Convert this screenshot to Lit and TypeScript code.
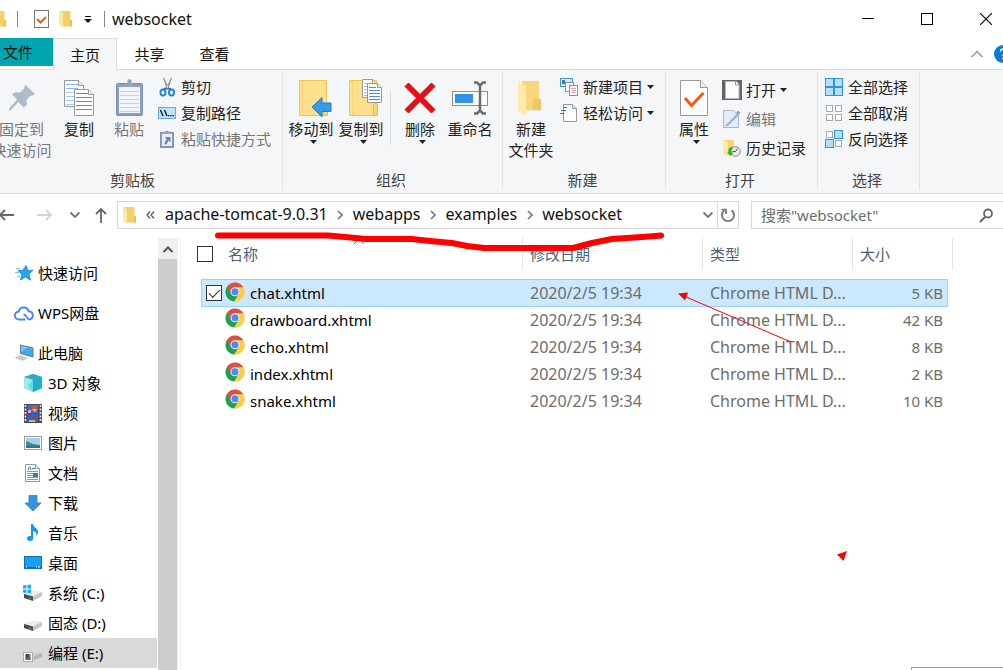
import { LitElement, html, svg, css, nothing, TemplateResult } from "lit";
import { customElement, property, state } from "lit/decorators.js";
import { classMap } from "lit/directives/class-map.js";

const icon = (w: number, h: number, body: unknown) => html`<svg
  width=${w}
  height=${h}
  viewBox="0 0 ${w} ${h}"
  aria-hidden="true"
>${body}</svg>`;

const lines = (x1: number, x2: number, y: number, step: number, n: number, color: string) =>
  Array.from({ length: n }, (_, i) =>
    svg`<path d="M${x1} ${y + i * step + 0.5}H${x2}" stroke=${color} fill="none"/>`);

const sheet = (x: number, y: number, w: number, h: number, fold: number) => svg`
  <path d="M${x + 0.5} ${y + 0.5}h${w - fold - 1}l${fold} ${fold}v${h - fold - 1}h${-(w - 1)}z" fill="#fdfdfd" stroke="#999"/>
  <path d="M${x + w - fold - 0.5} ${y + 0.5}v${fold}h${fold}" fill="#eee" stroke="#999"/>`;

const smallFolder = () => icon(14, 18, svg`
  <path d="M2 1h10.500v9l1 1v5.500H3z" fill="#f5cf6b"/>
  <path d="M12 10h2v6.500h-2z" fill="#edc050"/>
  <path d="M1 1l4 2.500v13L4 17.500 1 15z" fill="#ffe9a4"/>`);

const chrome = () => icon(20, 20, svg`
  <circle cx="10" cy="10" r="9.500" fill="#ffcd40"/>
  <path d="M1.770 5.250A9.500 9.500 0 0 0 9.200 19.470L13.900 12.200 10 10z" fill="#1aa15f"/>
  <path d="M9.200 19.470A9.500 9.500 0 0 0 18.230 5.250H10V10l4 2z" fill="#ffcd40"/>
  <path d="M1.770 5.250A9.500 9.500 0 0 1 18.230 5.250H10L6 12z" fill="#dd5144"/>
  <circle cx="10" cy="9.700" r="4.500" fill="#f3f3f3"/>
  <circle cx="10" cy="9.700" r="3.500" fill="#4a8af4"/>`);

const chevron = (dir: "right" | "down" | "up", color = "#777") =>
  dir === "right"
    ? icon(8, 10, svg`<path d="M2 1l4 4-4 4" fill="none" stroke=${color} stroke-width="1.700"/>`)
    : dir === "down"
      ? icon(12, 10, svg`<path d="M1.500 2.500L6 7l4.500-4.500" fill="none" stroke=${color} stroke-width="1.900"/>`)
      : icon(14, 10, svg`<path d="M1.500 8L7 2.500 12.500 8" fill="none" stroke=${color} stroke-width="1.500"/>`);

const caret = () => icon(7, 4, svg`<path d="M0 0h7L3.500 4z" fill="#222"/>`);

const cell = (x: number, y: number, on: boolean) => svg`<rect x=${x + 0.5} y=${y + 0.5} width=${on ? 8 : 6} height=${on ? 8 : 6} fill=${on ? "#b5e0fb" : "#fcfcfc"} stroke=${on ? "#2f93dd" : "#aaa"}/>`;

const bigFolder = svg`
  <path d="M1.500 1.500h27v24h1v11h-28z" fill="#fee08c" stroke="#eec64e"/>
  <path d="M4.500 2v34" stroke="#f6d376" fill="none"/>
  <rect x="25.500" y="24.500" width="4" height="12" rx="1.500" fill="#f8d674" stroke="#e8be48"/>`;

const drive = svg`
  <path d="M1 10l8-3 10 1v3l-8 5-10-3z" fill="#d9dada"/>
  <path d="M1 10l8-3 10 1-9 4.500z" fill="#eceded"/>
  <path d="M1 10l9 2.500V17l-9-3z" fill="#4a4d4e"/>
  <path d="M10 12.500L19 8v4l-9 5z" fill="#c3c5c6"/>
  <path d="M6 13.500l2 .6v1l-2-.6z" fill="#58d068"/>`;

const I: Record<string, () => TemplateResult> = {
  pin: () => icon(28, 28, svg`
    <path d="M17.500 1l9.500 9-3 1.800-1.500-.3-4 4.500.3 5-3 2.500-5.600-5.600L2.500 26.500 1 26l1.200-3 7-7.400L4 10.500l3-2.200 5 .2 4.500-4.500-.2-1.500z" fill="#acbacb"/>`),
  copy: () => icon(30, 36, svg`
    ${sheet(0, 0, 20, 27, 5)}${lines(2, 14, 4, 4, 2, "#8ab5f5")}${lines(2, 18, 12, 4, 4, "#a9c8f6")}
    ${sheet(10, 9, 20, 27, 5)}${lines(12, 24, 13, 4, 1, "#4a8cf0")}${lines(12, 28, 17, 4, 4, "#4a8cf0")}`),
  paste: () => icon(27, 37, svg`
    <rect x=".5" y="4.500" width="26" height="32" rx="1.500" fill="#8c9fc0" stroke="#7b8db0"/>
    <rect x="3" y="8" width="21" height="26" fill="#f1f5fa"/>
    ${lines(4, 23, 12, 4, 6, "#c4d3e8")}
    <path d="M6 8V5h4l1.500-1a2.200 2.200 0 0 1 4 0L17 5h4v3z" fill="#93a4bd"/>
    <circle cx="13.500" cy="2.500" r="2.200" fill="#93a4bd"/>`),
  cut: () => icon(18, 20, svg`
    <path d="M5 1l1-.5 5 11-2 1zM14 1l-1-.5-5 11 2 1z" fill="#8f9396"/>
    <path d="M9 11L5.500 12.500M9.500 11l3.500 1.500" stroke="#1e7bc4" stroke-width="2" fill="none"/>
    <ellipse cx="5" cy="15.500" rx="2.500" ry="3" fill="#fff" stroke="#1e87d2" stroke-width="2"/>
    <ellipse cx="13.500" cy="15.500" rx="2.500" ry="3" fill="#fff" stroke="#1e87d2" stroke-width="2"/>`),
  path: () => icon(18, 12, svg`
    <rect x=".5" y=".5" width="17" height="11" fill="#bfe2fb" stroke="#6aa9dc"/>
    <path d="M2.500 3l2.500 6M6.500 3L9 9" stroke="#111" stroke-width="1.300" fill="none"/>
    <path d="M10 8h1.300v1.300H10zM12.300 8h1.300v1.300h-1.300zM14.600 8h1.300v1.300h-1.300z" fill="#111"/>`),
  pasteLink: () => icon(18, 20, svg`
    <path d="M3 4h12v14H3z" fill="#e9eff7" stroke="#8497b8" stroke-width="2"/>
    <path d="M5 5V2.500h2.500a1.600 1.600 0 0 1 3 0H13V5z" fill="#93a4bd"/>
    <path d="M7 8h5.500v5.500l-2-2-2 4H6.500c0-2 .5-3.500 2-5z" fill="#6d87ae"/>`),
  moveTo: () => icon(42, 38, svg`<g transform="translate(8 0)">${bigFolder}
    <path d="M14 28l10-9.500v5.500h9v8.500h-9v5.500z" fill="#369be9" stroke="#1e7fcf"/></g>`),
  copyTo: () => icon(42, 38, svg`<g transform="translate(8 0)">${bigFolder}
    ${sheet(14, 0, 15, 19, 4)}${lines(16, 24, 4, 3, 5, "#9fc1f4")}
    ${sheet(19, 4, 15, 20, 4)}${lines(21, 28, 8, 3, 1, "#4a8cf0")}${lines(21, 32, 11, 3, 4, "#4a8cf0")}</g>`),
  remove: () => icon(32, 32, svg`
    <path d="M4.500 1L16 12.500 27.500 1 31 4.500 19.500 16 31 27.500 27.500 31 16 19.500 4.500 31 1 27.500 12.500 16 1 4.500z" fill="#ea0c12" stroke="#b5181d" stroke-width="1"/>`),
  rename: () => icon(36, 34, svg`
    <rect x=".5" y="10.500" width="35" height="14" fill="#fbfbfb" stroke="#8b8f92"/>
    <rect x="3" y="13" width="18" height="9" fill="#2f93e8"/>
    <path d="M22 1.500h3l3 3 3-3h3M22 32.500h3l3-3 3 3h3M28 3.500v27" fill="none" stroke="#6b6e70" stroke-width="2.500"/>`),
  newFolder: () => icon(26, 36, svg`
    <path d="M4 1h17v17l2 1.500V30H6z" fill="#f7d67c"/>
    <path d="M16 18l7 1.500V30h-9z" fill="#efc760"/>
    <path d="M8 30l-1 5 3-4h14l2-1z" fill="#e9eaeb"/>
    <path d="M0 1l8 5v26l-2 3-6-4z" fill="#ffe9ab"/>`),
  newItem: () => icon(18, 18, svg`
    <rect x=".5" y=".5" width="12" height="8" fill="#cdeaf9" stroke="#4b95bd"/>
    <path d="M2 2h3v4H2z" fill="#3f7fa8"/>
    <rect x="5.500" y="4.500" width="8" height="9" fill="#fafafa" stroke="#8f8f8f"/>
    <rect x="9.500" y="7.500" width="8" height="10" fill="#fff" stroke="#8f8f8f"/>
    ${lines(11, 16, 10, 2, 3, "#e7a6a6")}`),
  easyAccess: () => icon(18, 19, svg`
    ${sheet(3, 0, 14, 18, 4)}
    <path d="M3 3.500h4M1 6.500h5M0 9.500h4" stroke="#2c6fb4" stroke-width="1.200" fill="none"/>`),
  props: () => icon(28, 36, svg`${sheet(0, 0, 28, 36, 7)}
    <path d="M5 18l6.500 7.500L23.500 13" fill="none" stroke="#f25a13" stroke-width="3"/>`),
  open: () => icon(20, 20, svg`
    <rect width="20" height="20" fill="#626569"/>
    <path d="M3.500 1.500h11l2.500 3v14H3.500z" fill="#fdfdfd" stroke="#b9b9b9"/>
    <path d="M13.500 1.500v3.500H17" fill="none" stroke="#999"/>`),
  edit: () => icon(18, 18, svg`
    <path d="M.5.500h10l5 5v12H.500z" fill="#e3ecf9" stroke="#a8b8cf"/>
    <path d="M2 16L13.500 4l2 1.500L5 16z" fill="#9eb3d3"/><path d="M13 3l2-2.500 2.500 2L15.500 5z" fill="#8da3c6"/>`),
  history: () => icon(18, 18, svg`
    <path d="M1 1h10v8l1 1v6H2z" fill="#f8d475"/><path d="M0 1l5 2v13l-1 1.500L0 15z" fill="#ffe9a9"/>
    <circle cx="12.500" cy="12.500" r="4.800" fill="#e8e8e8" stroke="#8a8d8f"/>
    <path d="M12.500 12.500l2-3M12.500 12.500h-3" stroke="#555" fill="none"/>
    <path d="M9 8c-3 0-4 3-3.500 5H4l3.500 4 3-3.500H8.500C8 11 8.500 10 10 9z" fill="#27b52c"/>`),
  selAll: () => icon(18, 18, svg`${cell(0, 0, true)}${cell(9, 0, true)}${cell(0, 9, true)}${cell(9, 9, true)}`),
  selNone: () => icon(18, 18, svg`${cell(1, 1, false)}${cell(10, 1, false)}${cell(1, 10, false)}${cell(10, 10, false)}`),
  selInv: () => icon(18, 18, svg`${cell(1, 1, false)}${cell(9, 0, true)}${cell(0, 9, true)}${cell(10, 10, false)}`),

  star: () => icon(18, 18, svg`
    <path d="M11 1.500l2 5 5-.3-4 4 1.500 6L10.500 13 5.500 16l1.300-5.500L3 6.500l5-.2z" fill="#2aa5ec" stroke="#1583cc" stroke-width=".8"/>
    <path d="M1 4.500h4M0 8.500h4M2 12.500h3" stroke="#7cc4f3" fill="none"/>`),
  cloud: () => icon(20, 18, svg`
    <path d="M11.500 15.500H5A4 4 0 0 1 4.800 7.500 5 5 0 0 1 14.500 7.200 4.200 4.200 0 0 1 15.500 15.500C12.500 15.500 13.500 11 9.500 10.500" fill="none" stroke="#4a86ee" stroke-width="1.900"/>`),
  pc: () => icon(20, 18, svg`
    <path d="M6.500 1l12.500 3v9L6.500 9.500z" fill="#3ba9ee" stroke="#6f7a82"/>
    <path d="M7 1.700L14 3.400 7 8z" fill="#74c8f7"/>
    <path d="M0 13.500l6-2.500 8 3-6 3z" fill="#d5d8da"/><path d="M2 13.500l9 2.500M5 12l8 2.500" stroke="#a5a9ab" stroke-width=".6"/>`),
  cube: () => icon(18, 18, svg`
    <path d="M9 0l9 3v11l-9 4-9-4V3z" fill="#3fc3d6"/><path d="M9 0l9 3-9 3-9-3z" fill="#3aa6b6"/>
    <path d="M0 3l9 3v12l-9-4z" fill="#9de9f0"/><path d="M9 6l9-3v11l-9 4z" fill="#1bb0cf"/><path d="M9 6L4 11.500 9 18z" fill="#62d6e4"/>`),
  video: () => icon(18, 19, svg`
    <rect width="18" height="19" fill="#4e4e4e"/><rect x="4" y="1" width="10" height="8" fill="#3f6ed8"/><rect x="4" y="10" width="10" height="8" fill="#335fcc"/>
    <path d="M1.500 1v17M16.500 1v17" stroke="#e8e8e8" stroke-width="1.600" stroke-dasharray="2 1.500"/>
    <circle cx="10.500" cy="4.500" r="2.500" fill="#e94b23"/><path d="M8 5h5l-2 3z" fill="#f3ca2d"/><path d="M4 6h3v3H4z" fill="#f0a0b8"/><path d="M8 13l4-2v4z" fill="#d92b21"/><path d="M5 16h6v2H5z" fill="#e9b62d"/>`),
  picture: () => icon(18, 15, svg`
    <rect x=".5" y=".5" width="17" height="13" fill="#fff" stroke="#999"/><path d="M2 2h14v10H2z" fill="#9bd2f5"/>
    <path d="M2 5l3 1 4 2 7 1v3H2z" fill="#4d8a63"/><path d="M2 10h14v2H2z" fill="#326fa8"/>`),
  doc: () => icon(16, 18, svg`${sheet(0, 0, 15, 18, 4)}
    <path d="M3 6l1-3h1l1 3M7 4.500h3" stroke="#2d8fd8" fill="none"/>${lines(2, 13, 7, 2, 5, "#8d9aa2")}<path d="M8 9h5v4H8z" fill="#3682ad"/>`),
  down: () => icon(18, 18, svg`<path d="M5 1.500h8V9h4l-8 8-8-8h4z" fill="#3593e2" stroke="#2b7fca" stroke-width=".8"/>`),
  music: () => icon(18, 18, svg`
    <ellipse cx="6" cy="14.500" rx="3" ry="2.500" fill="#0a9bf5"/><path d="M7 0h2c.5 3.500 5 4.500 5 8 0 2-1 3-2 4 1-3-.5-4.500-3-5v8H7z" fill="#0a9bf5"/>`),
  desktop: () => icon(18, 14, svg`
    <rect x=".5" y=".5" width="17" height="12" fill="#14a0fb" stroke="#1670b3"/><path d="M1 11.500h16" stroke="#0d6fb9"/><path d="M2 11h1M12 11h1M14 11h2" stroke="#fff"/>`),
  driveC: () => icon(20, 18, svg`${drive}<path d="M0 1.500l3.500-.5v3.500H0zM4.500 1L8 .5v4H4.500zM0 5.500h3.500V9L0 8.500zM4.500 5.500H8v4L4.500 9z" fill="#10b3f0"/>`),
  driveD: () => icon(20, 18, svg`${drive}`),
  driveE: () => icon(20, 18, svg`<path d="M9 11l3-3 7 1v4l-8 3z" fill="#cfd1d2"/><path d="M11 12l8-3v4l-8 3z" fill="#b3b5b6"/>
    <rect x=".5" y="8.500" width="9" height="9" fill="#fff" stroke="#aaa"/><path d="M2 10h6v6H2z" fill="#85a1a7"/><path d="M3 10h3v3H3z" fill="#4e4137"/><path d="M3 13h4v3H3z" fill="#3e6f86"/>`),
};

@customElement("ribbon-button")
class RibbonButton extends LitElement {
  @property() icon = "";
  @property() label = "";
  @property() second = "";
  @property({ type: Boolean }) small = false;
  @property({ type: Boolean }) menu = false;
  @property({ type: Boolean }) disabled = false;
  static styles = css`
    :host { display: block; }
    button {
      display: flex; align-items: center; border: 0; padding: 0; background: none;
      font: inherit; color: #222; white-space: nowrap; width: 100%;
    }
    button:disabled { color: #777; }
    .big { flex-direction: column; line-height: 21px; }
    .big .pic { height: 43px; }
    .pic { display: flex; align-items: center; justify-content: center; }
    .big svg { flex: none; }
    .big .arrow { padding-left: 4px; }
    .small { gap: 4px; line-height: 20px; height: 26px; }
    .small .pic { width: 20px; }
    .arrow { display: flex; }
    svg { display: block; }
  `;
  render() {
    return html`<button class=${this.small ? "small" : "big"} ?disabled=${this.disabled}>
      <span class="pic">${I[this.icon]()}</span>
      <span>${this.label}</span>
      ${this.second ? html`<span>${this.second}</span>` : nothing}
      ${this.menu ? html`<span class="arrow">${caret()}</span>` : nothing}
    </button>`;
  }
}

interface Place { icon: string; name: string; level: number; gap?: boolean; selected?: boolean }
interface Entry { name: string; date: string; type: string; size: string; checked: boolean }

@customElement("app-root")
class AppRoot extends LitElement {
  @state() private places: Place[] = [
    { icon: "star", name: "快速访问", level: 0, gap: true },
    { icon: "cloud", name: "WPS网盘", level: 0, gap: true },
    { icon: "pc", name: "此电脑", level: 0 },
    { icon: "cube", name: "3D 对象", level: 1 },
    { icon: "video", name: "视频", level: 1 },
    { icon: "picture", name: "图片", level: 1 },
    { icon: "doc", name: "文档", level: 1 },
    { icon: "down", name: "下载", level: 1 },
    { icon: "music", name: "音乐", level: 1 },
    { icon: "desktop", name: "桌面", level: 1 },
    { icon: "driveC", name: "系统 (C:)", level: 1 },
    { icon: "driveD", name: "固态 (D:)", level: 1 },
    { icon: "driveE", name: "编程 (E:)", level: 1, selected: true },
  ];
  @state() private files: Entry[] = [
    ["chat.xhtml", "5 KB"], ["drawboard.xhtml", "42 KB"], ["echo.xhtml", "8 KB"],
    ["index.xhtml", "2 KB"], ["snake.xhtml", "10 KB"],
  ].map(([name, size], i) => ({ name, size, date: "2020/2/5 19:34", type: "Chrome HTML D...", checked: i === 0 }));

  static styles = css`
    :host {
      display: flex; flex-direction: column; position: relative; height: 100vh; overflow: hidden;
      background: #fff; color: #111;
      font: 15px/20px "Noto Sans", "Noto Sans CJK SC", sans-serif;
    }
    * { box-sizing: border-box; }
    svg { display: block; flex: none; }
    button, input { font: inherit; color: inherit; }
    button { border: 0; padding: 0; background: none; }
    a { color: inherit; text-decoration: none; }

    .title { display: flex; align-items: center; height: 38px; flex: none; }
    .quick { display: flex; align-items: center; margin-left: -8px; }
    .quick button { display: flex; justify-content: center; }
    .quick .folder { width: 14px; }
    .bar { width: 1px; height: 16px; background: #888; }
    .quick .bar { margin: 0 6px 0 11px; }
    .quick .check { width: 34px; }
    .quick .down { width: 32px; }
    .title h1 { font-size: 16px; line-height: 20px; font-weight: 400; margin: 0 auto 0 7px; color: #111; }
    .win { display: flex; margin-right: -12px; }
    .win button { width: 59px; height: 38px; display: grid; place-items: center; }

    .tabs { display: flex; height: 32px; flex: none; box-shadow: inset 0 -1px #dadbdc; }
    .tabs button { width: 65px; height: 31px; }
    .tabs .file { width: 70px; height: 28px; margin-left: -17px; background: #00a5b0; }
    .tabs .active { height: 32px; background: #f5f6f7; border: 1px solid #dadbdc; border-bottom: 0; width: 64px; }
    .tabs .end { display: flex; align-items: center; gap: 10px; margin: 0 -9px 0 auto; }
    .tabs .end button { width: auto; }
    .help { fill: #0a7ad8; }

    .ribbon { display: flex; flex: none; background: #f5f6f7; border-bottom: 1px solid #dadbdc; padding: 2px 0 3px; }
    .group { border-right: 1px solid #e2e3e4; padding: 4px 0 0 3px; }
    .group:first-child { margin-left: -18px; width: 301px; padding-left: 7px; }
    .organize { width: 220px; }
    .create { width: 163px; }
    .open { width: 152px; }
    .select { width: 102px; }
    .body { display: flex; height: 94px; }
    .body > ribbon-button { width: 50px; flex: none; }
    .body > .wide { width: 65px; }
    .body > hr { border: 0; width: 1px; height: 54px; background: #dcddde; margin: 15px 4px 0; }
    .stack { padding-left: 3px; margin-top: -2px; }
    .loose { display: grid; gap: 3px; align-content: start; padding-left: 3px; margin-top: 1px; }
    .caption { text-align: center; color: #444; padding-right: 6px; }

    .address { display: flex; flex: none; align-items: flex-start; padding: 7px 0 9px; }
    .go { display: flex; margin-left: -14px; margin-right: 1px; height: 28px; align-items: center; }
    .go button { display: grid; place-items: center; height: 28px; width: 30px; }
    .go .far { width: 39px; }
    .go .tight { width: 22px; }
    .path { display: flex; flex: 1; min-width: 0; align-items: center; height: 28px; border: 1px solid #d9d9d9; padding-left: 4px; }
    .path .back { margin: 0 10px; color: #444; display: flex; }
    .path a { white-space: nowrap; font-size: 16px; padding-bottom: 2px; }
    .path .sep { width: 25px; display: flex; justify-content: center; }
    .path .drop { margin-left: auto; width: 18px; display: grid; place-items: center; }
    .path .reload { width: 21px; height: 26px; border-left: 1px solid #d9d9d9; display: grid; place-items: center; }
    .search { display: flex; align-items: center; width: 252px; height: 28px; margin-left: 12px; border: 1px solid #d9d9d9; border-right: 0; padding: 0 9px; }
    .search input { flex: 1; min-width: 0; border: 0; padding: 0; outline: 0; background: none; }
    .search input::placeholder { color: #6d6d6d; opacity: 1; }

    .main { display: flex; flex: 1; min-height: 0; }
    nav { width: 158px; flex: none; overflow: hidden; padding: 20px 1px 0 0; }
    nav a { display: flex; align-items: center; height: 30px; gap: 4px; padding-left: 14px; color: #000; white-space: nowrap; }
    nav a.sub { padding-left: 23px; gap: 5px; }
    nav a.gap { margin-bottom: 10px; }
    nav a.selected { background: #d9d9d9; }
    nav .ico { width: 20px; display: flex; justify-content: center; }
    .scroll { width: 20px; flex: none; background: #f0f0f0; display: flex; flex-direction: column; }
    .scroll button { height: 21px; display: grid; place-items: center; }
    .thumb { flex: 1; background: #cdcdcd; margin-right: 1px; }
    .files { flex: 1; min-width: 0; margin-left: 2px; border-left: 1px solid #f0f0f0; }
    table, thead, tbody { display: block; }
    tr { display: grid; align-items: center; }
    th, td { padding: 0; text-align: left; font-weight: 400; white-space: nowrap; }
    thead tr { grid-template-columns: 326px 180px 150px 100px; padding-left: 16px; margin-bottom: 9px; }
    th { height: 32px; border-right: 1px solid #e5e5e5; color: #4c607a; padding-left: 7px; display: flex; align-items: center; }
    th:first-child { padding-left: 0; gap: 15px; }
    tbody tr { grid-template-columns: 328px 180px 150px 1fr; width: 747px; height: 27px; margin-left: 20px; color: #6d6d6d; }
    tbody tr.on { background: #cce8ff; box-shadow: inset 0 0 0 1px #99d1ff; height: 28px; margin-bottom: -1px; }
    td { padding-left: 1px; font-size: 16px; }
    td:last-child { text-align: right; padding-right: 5px; font-size: 15px; }
    td.name { display: flex; align-items: center; gap: 5px; color: #000; padding-left: 5px; font-size: 15px; }
    .name .ico { margin: -3px 0 0 -2px; }
    input[type="checkbox"] { appearance: none; flex: none; width: 16px; height: 16px; margin: 0; border: 1px solid #333; background: #fff; display: grid; place-items: center; }
    tbody tr:not(.on) input { opacity: 0; }
    input:checked::before { content: ""; width: 10px; height: 5px; border: solid #333; border-width: 0 0 1px 1px; rotate: -45deg; margin-bottom: 3px; }

    .ink { position: absolute; inset: 0; pointer-events: none; width: 100%; height: 100%; }
    .sort { position: absolute; left: 353px; top: 238px; }
    .popup { position: absolute; right: 0; bottom: 0; width: 92px; height: 3px; border: solid #a0a0a0; border-width: 1px 0 0 1px; background: #fff; }
  `;

  private toggle(i: number) {
    this.files = this.files.map((f, n) => (n === i ? { ...f, checked: !f.checked } : f));
  }

  private titleBar() {
    return html`<header class="title">
      <div class="quick">
        <button class="folder" aria-label="资源管理器">${smallFolder()}</button>
        <span class="bar"></span>
        <button class="check" aria-label="属性">${icon(15, 18, svg`
          <rect x=".5" y=".5" width="14" height="17" fill="#fbfbfb" stroke="#777"/>
          <path d="M3 9l3.500 3.500L12 7" fill="none" stroke="#ee5a1c" stroke-width="2"/>`)}</button>
        <button class="folder" aria-label="新建文件夹">${smallFolder()}</button>
        <button class="down" aria-label="自定义快速访问工具栏">${icon(8, 8, svg`<path d="M1 1.500h6" stroke="#111"/><path d="M0 4h8L4 8z" fill="#111"/>`)}</button>
      </div>
      <span class="bar"></span>
      <h1>websocket</h1>
      <div class="win">
        <button aria-label="最小化">${icon(12, 12, svg`<path d="M0 5.500h12" stroke="#000"/>`)}</button>
        <button aria-label="最大化">${icon(12, 12, svg`<rect x=".5" y=".5" width="11" height="11" fill="none" stroke="#000"/>`)}</button>
        <button aria-label="关闭">${icon(12, 12, svg`<path d="M0 0l12 12M12 0L0 12" stroke="#000" stroke-width="1.100"/>`)}</button>
      </div>
    </header>
    <div class="tabs">
      <button class="file">文件</button>
      <button class="active">主页</button>
      <button>共享</button>
      <button>查看</button>
      <div class="end">
        <button aria-label="折叠功能区">${chevron("up", "#999")}</button>
        <button aria-label="帮助">${icon(18, 18, svg`<circle class="help" cx="9" cy="9" r="9"/>
          <path d="M6.500 6.500a2.600 2.600 0 1 1 4 2.200c-1 .7-1.500 1-1.500 2.300M9 12.500v1.500" fill="none" stroke="#fff" stroke-width="1.500"/>`)}</button>
      </div>
    </div>`;
  }

  private ribbon() {
    return html`<div class="ribbon">
      <section class="group">
        <div class="body">
          <ribbon-button class="wide" icon="pin" label="固定到" second="快速访问" disabled></ribbon-button>
          <ribbon-button icon="copy" label="复制"></ribbon-button>
          <ribbon-button icon="paste" label="粘贴" disabled></ribbon-button>
          <div class="stack">
            <ribbon-button small icon="cut" label="剪切"></ribbon-button>
            <ribbon-button small icon="path" label="复制路径"></ribbon-button>
            <ribbon-button small icon="pasteLink" label="粘贴快捷方式" disabled></ribbon-button>
          </div>
        </div>
        <div class="caption">剪贴板</div>
      </section>
      <section class="group organize">
        <div class="body">
          <ribbon-button icon="moveTo" label="移动到" menu></ribbon-button>
          <ribbon-button icon="copyTo" label="复制到" menu></ribbon-button>
          <hr />
          <ribbon-button icon="remove" label="删除" menu></ribbon-button>
          <ribbon-button icon="rename" label="重命名"></ribbon-button>
        </div>
        <div class="caption">组织</div>
      </section>
      <section class="group create">
        <div class="body">
          <ribbon-button icon="newFolder" label="新建" second="文件夹"></ribbon-button>
          <div class="stack">
            <ribbon-button small menu icon="newItem" label="新建项目"></ribbon-button>
            <ribbon-button small menu icon="easyAccess" label="轻松访问"></ribbon-button>
          </div>
        </div>
        <div class="caption">新建</div>
      </section>
      <section class="group open">
        <div class="body">
          <ribbon-button icon="props" label="属性" menu></ribbon-button>
          <div class="loose">
            <ribbon-button small menu icon="open" label="打开"></ribbon-button>
            <ribbon-button small icon="edit" label="编辑" disabled></ribbon-button>
            <ribbon-button small icon="history" label="历史记录"></ribbon-button>
          </div>
        </div>
        <div class="caption">打开</div>
      </section>
      <section class="group select">
        <div class="body">
          <div class="stack">
            <ribbon-button small icon="selAll" label="全部选择"></ribbon-button>
            <ribbon-button small icon="selNone" label="全部取消"></ribbon-button>
            <ribbon-button small icon="selInv" label="反向选择"></ribbon-button>
          </div>
        </div>
        <div class="caption">选择</div>
      </section>
    </div>`;
  }

  private addressBar() {
    const arrow = (d: string, color: string) => icon(16, 16, svg`<path d=${d} fill="none" stroke=${color} stroke-width="1.800"/>`);
    const crumbs = ["apache-tomcat-9.0.31", "webapps", "examples", "websocket"];
    return html`<div class="address">
      <div class="go">
        <button class="far" aria-label="后退">${arrow("M16 8H2M7 3L2 8l5 5", "#666")}</button>
        <button class="far" aria-label="前进">${arrow("M0 8h14M9 3l5 5-5 5", "#d3d3d3")}</button>
        <button class="tight" aria-label="最近位置">${chevron("down")}</button>
        <button aria-label="上移">${arrow("M8 16V2M3 7l5-5 5 5", "#666")}</button>
      </div>
      <div class="path">
        ${smallFolder()}
        <span class="back">${icon(9, 8, svg`<path d="M4 .5L1 4l3 3.500M8 .5L5 4l3 3.500" fill="none" stroke="#555" stroke-width="1.200"/>`)}</span>
        ${crumbs.map((c, i) => html`${i ? html`<span class="sep">${chevron("right")}</span>` : nothing}<a href="#">${c}</a>`)}
        <button class="drop" aria-label="以前的位置">${chevron("down")}</button>
        <button class="reload" aria-label="刷新">${icon(16, 16, svg`
          <path d="M4.500 3.300A6 6 0 1 0 11.500 3.300" fill="none" stroke="#777" stroke-width="1.900"/><path d="M1.500 2.500H6V7" fill="none" stroke="#777" stroke-width="1.700"/>`)}</button>
      </div>
      <label class="search">
        <input type="text" aria-label="搜索" placeholder='搜索"websocket"' />
        ${icon(15, 15, svg`<circle cx="9" cy="5.500" r="4" fill="none" stroke="#666" stroke-width="1.800"/><path d="M6.500 8.500L1 14" stroke="#666" stroke-width="2"/>`)}
      </label>
    </div>`;
  }

  render() {
    return html`
      ${this.titleBar()} ${this.ribbon()} ${this.addressBar()}
      <div class="main">
        <nav>
          ${this.places.map((p) => html`<a href="#" class=${classMap({ sub: p.level === 1, gap: !!p.gap, selected: !!p.selected })}>
            <span class="ico">${I[p.icon]()}</span><span>${p.name}</span></a>`)}
        </nav>
        <div class="scroll">
          <button aria-label="向上滚动">${icon(12, 8, svg`<path d="M1.500 7L6 2.500 10.500 7" fill="none" stroke="#555" stroke-width="2"/>`)}</button>
          <div class="thumb"></div>
        </div>
        <div class="files">
          <table>
            <thead><tr>
              <th><input type="checkbox" aria-label="全选" />名称</th>
              <th>修改日期</th><th>类型</th><th>大小</th>
            </tr></thead>
            <tbody>
              ${this.files.map((f, i) => html`<tr class=${classMap({ on: f.checked })}>
                <td class="name">
                  <input type="checkbox" aria-label=${f.name} .checked=${f.checked} @change=${() => this.toggle(i)} />
                  <span class="ico">${chrome()}</span><a href="#">${f.name}</a>
                </td>
                <td>${f.date}</td><td>${f.type}</td><td>${f.size}</td>
              </tr>`)}
            </tbody>
          </table>
        </div>
      </div>
      <div class="sort">${icon(12, 8, svg`<path d="M1 6l5-5 5 5" fill="none" stroke="#777"/>`)}</div>
      <svg class="ink" aria-hidden="true">
        <path d="M218 235.500H328L345 237 366 239H412L430 241 452 243 467 246 484 248H573L592 243 612 239 642 237 661 235.500" fill="none" stroke="#f00" stroke-width="6" stroke-linecap="round" stroke-linejoin="round"/>
        <path d="M685 296.500L791 342" stroke="#f00" fill="none"/>
        <path d="M678 293.500L688 292.500 685 300.500zM837 554.500L847 551 843.500 561z" fill="#f00"/>
      </svg>
      <div class="popup"></div>`;
  }
}
